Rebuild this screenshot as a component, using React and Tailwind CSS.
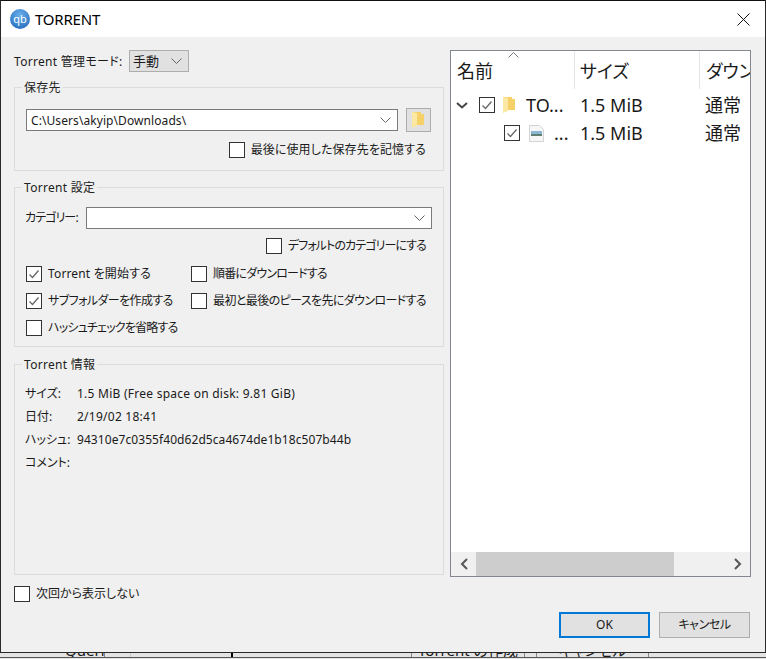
import React from "react";

const uiFont = "font-['Noto_Sans','Noto_Sans_CJK_JP',sans-serif] [font-feature-settings:'palt']";

function Check({ checked, label, className = "", labelClass = "" }) {
    return (
        <label className={`flex items-center gap-[6px] h-4 text-xs leading-4 whitespace-nowrap ${className}`}>
            <span className="w-4 h-4 shrink-0 bg-white border border-[#333] flex items-center justify-center">
                {checked && (
                    <svg width="12" height="12" viewBox="0 0 12 12" fill="none" stroke="#666" strokeWidth="1.3">
                        <path d="M1.5 6.5 L4.5 9.5 L10.5 2.5" />
                    </svg>
                )}
            </span>
            {label && <span className={labelClass}>{label}</span>}
        </label>
    );
}

function Chevron({ className = "" }) {
    return (
        <svg width="11" height="6" viewBox="0 0 11 6" fill="none" stroke="#666" className={className}>
            <path d="M0.5 0.5 L5.5 5.5 L10.5 0.5" />
        </svg>
    );
}

function Folder({ className = "" }) {
    return (
        <svg width="13" height="18" viewBox="0 0 13 18" className={className}>
            <path d="M1 1 H9 V3 H12 V14 H4 L1 14 Z" fill="#f5d168" />
            <path d="M0 1 L5 2 V15 L0 17 Z" fill="#fbe8a2" />
        </svg>
    );
}

function Group({ title, className = "", children }) {
    return (
        <fieldset className={`border border-[#dcdcdc] ${className}`}>
            <legend className="ml-[7px] px-[2px] text-xs leading-4 text-[#222]">
                <span className="block translate-y-px tracking-[0.3px]">{title}</span>
            </legend>
            {children}
        </fieldset>
    );
}

function InfoRow({ label, value, valueClass = "tracking-[0.25px]" }) {
    return (
        <div className="flex h-[23px] items-center text-xs">
            <span className="w-[52px] shrink-0">{label}</span>
            <span className={valueClass}>{value}</span>
        </div>
    );
}

function TreeRow({ chevron, indent, icon, name, nameGap, checked = true }) {
    return (
        <div className="flex h-7 items-center text-[18px] leading-7">
            <div className="w-[124px] shrink-0 flex items-center overflow-hidden">
                <span className="w-[28px] shrink-0 pl-[5px]">
                    {chevron && (
                        <svg width="12" height="7" viewBox="0 0 12 7" fill="none" stroke="#444" strokeWidth="2">
                            <path d="M1 1 L6 5.5 L11 1" />
                        </svg>
                    )}
                </span>
                <Check checked={checked} className={indent} />
                {icon}
                <span className={nameGap}>{name}</span>
            </div>
            <span className="w-[125px] shrink-0 pl-[5px]">1.5 MiB</span>
            <span className="pl-[5px] whitespace-nowrap">通常</span>
        </div>
    );
}

export default function App() {
    return (
        <div className={`w-[766px] h-[659px] overflow-hidden bg-[#e4e4e4] text-[#1a1a1a] ${uiFont}`}>
            {/* dialog */}
            <div className="h-[653px] flex flex-col bg-[#f0f0f0] border border-[#2a2a2a] border-t-[#111]">
                <div className="h-[36px] shrink-0 bg-white flex items-center pl-[9px] pr-[15px]">
                    <span className="w-5 h-5 rounded-full bg-[radial-gradient(circle_at_50%_30%,#6aaeea,#1c64b8)] text-white text-[11px] leading-5 text-center">
                        qb
                    </span>
                    <span className="ml-[5px] text-[15px] tracking-[-0.2px] text-black">TORRENT</span>
                    <svg width="13" height="13" viewBox="0 0 13 13" stroke="#111" strokeWidth="1" className="ml-auto">
                        <path d="M0.5 0.5 L12.5 12.5 M12.5 0.5 L0.5 12.5" />
                    </svg>
                </div>

                <div className="flex flex-1 pl-[13px] pr-[14px] pt-[13px] gap-[6px]">
                    {/* left column */}
                    <div className="w-[430px] shrink-0">
                        <div className="flex items-center h-[22px] text-xs">
                            <span className="w-[115px] pt-[2px] tracking-[0.3px]">Torrent 管理モード:</span>
                            <div className="w-[60px] h-[22px] bg-[#e1e1e1] border border-[#adadad] flex items-center justify-between pl-[3px] pr-[6px]">
                                <span className="pt-[2px] text-[13px]">手動</span>
                                <Chevron />
                            </div>
                        </div>

                        <Group title="保存先" className="mt-[7px] h-[92px]">
                            <div className="px-[11px]">
                                <div className="flex items-center mt-[13px]">
                                    <div className="w-[372px] h-[22px] bg-white border border-[#7a7a7a] flex items-center justify-between pl-1 pr-[6px] text-xs">
                                        <span className="pt-[1px] tracking-[0.08px]">C:\Users\akyip\Downloads\</span>
                                        <Chevron />
                                    </div>
                                    <div className="ml-2 w-[25px] h-6 bg-[#e1e1e1] border border-[#adadad] flex items-center justify-center">
                                        <Folder />
                                    </div>
                                </div>
                                <div className="flex justify-end pr-[6px] mt-[10px]">
                                    <Check label="最後に使用した保存先を記憶する" labelClass="tracking-[0.1px]" />
                                </div>
                            </div>
                        </Group>

                        <Group title="Torrent 設定" className="mt-[8px] h-[168px]">
                            <div className="px-[10px]">
                                <div className="flex items-center mt-[12px] text-xs">
                                    <span className="w-[61px] tracking-[-0.9px]">カテゴリー:</span>
                                    <div className="w-[346px] h-[22px] bg-white border border-[#7a7a7a] flex items-center justify-end pr-[6px]">
                                        <Chevron />
                                    </div>
                                </div>
                                <div className="flex justify-end pr-[7px] mt-[9px]">
                                    <Check label="デフォルトのカテゴリーにする" labelClass="tracking-[-0.9px]" />
                                </div>
                                <div className="grid grid-cols-[165px_1fr] gap-y-[11px] mt-[12px] pl-px">
                                    <Check checked label="Torrent を開始する" labelClass="tracking-[0.15px]" />
                                    <Check label="順番にダウンロードする" labelClass="tracking-[-0.8px]" />
                                    <Check checked label="サブフォルダーを作成する" labelClass="tracking-[-0.6px]" />
                                    <Check label="最初と最後のピースを先にダウンロードする" labelClass="tracking-[-0.6px]" />
                                    <Check label="ハッシュチェックを省略する" labelClass="tracking-[-0.8px]" />
                                </div>
                            </div>
                        </Group>

                        <Group title="Torrent 情報" className="mt-[9px] h-[219px]">
                            <div className="px-[10px] mt-[10px]">
                                <InfoRow label="サイズ:" value="1.5 MiB (Free space on disk: 9.81 GiB)" />
                                <InfoRow label="日付:" value="2/19/02 18:41" />
                                <InfoRow
                                    label="ハッシュ:"
                                    value="94310e7c0355f40d62d5ca4674de1b18c507b44b"
                                    valueClass="tracking-[0.07px]"
                                />
                                <InfoRow label="コメント:" value="" />
                            </div>
                        </Group>

                        <Check label="次回から表示しない" className="mt-[11px]" />
                    </div>

                    {/* file tree */}
                    <div className="w-[301px] h-[527px] shrink-0 bg-white border border-[#828790] flex flex-col">
                        <div className="relative h-[38px] shrink-0 flex text-[18px] overflow-hidden">
                            <svg width="11" height="6" viewBox="0 0 11 6" fill="none" stroke="#777" className="absolute left-[57px] top-[1px]">
                                <path d="M0.5 5.5 L5.5 0.5 L10.5 5.5" />
                            </svg>
                            <div className="w-[124px] shrink-0 border-r border-[#e5e5e5] pl-[6px] pt-[7px]">名前</div>
                            <div className="w-[125px] shrink-0 border-r border-[#e5e5e5] pl-[5px] pt-[7px]">サイズ</div>
                            <div className="pl-[6px] pt-[7px] whitespace-nowrap">ダウンロード</div>
                        </div>
                        <div className="flex-1 pt-[2px]">
                            <TreeRow
                                chevron
                                icon={<Folder className="ml-2 shrink-0" />}
                                name="TO..."
                                nameGap="ml-[10px]"
                            />
                            <TreeRow
                                indent="ml-[25px]"
                                icon={
                                    <svg width="15" height="17" viewBox="0 0 15 17" className="ml-[9px] shrink-0">
                                        <path d="M0.5 0.5 H10.5 L14.5 4.5 V16.5 H0.5 Z" fill="#f6f6f6" stroke="#d4d4d4" />
                                        <rect x="2" y="6" width="11" height="5" fill="#8db7d4" />
                                        <rect x="2" y="9" width="11" height="2" fill="#5f7f70" />
                                    </svg>
                                }
                                name="..."
                                nameGap="ml-[10px]"
                            />
                        </div>
                        <div className="h-[24px] shrink-0 bg-[#f0f0f0] flex">
                            <div className="w-[25px] flex items-center justify-center">
                                <svg width="8" height="12" viewBox="0 0 8 12" fill="none" stroke="#555" strokeWidth="2">
                                    <path d="M7 1 L2 6 L7 11" />
                                </svg>
                            </div>
                            <div className="w-[198px] bg-[#cdcdcd]" />
                            <div className="flex-1 flex items-center justify-end pr-2">
                                <svg width="8" height="12" viewBox="0 0 8 12" fill="none" stroke="#555" strokeWidth="2">
                                    <path d="M1 1 L6 6 L1 11" />
                                </svg>
                            </div>
                        </div>
                    </div>
                </div>

                <div className="h-[40px] shrink-0 flex justify-end gap-[9px] pr-[15px]">
                    <button className="w-[91px] h-[26px] bg-[#e1e1e1] border-2 border-[#0078d7] text-xs">OK</button>
                    <button className="w-[91px] h-[26px] bg-[#e1e1e1] border border-[#adadad] text-xs tracking-[-0.4px]">キャンセル</button>
                </div>
            </div>

            {/* window behind the dialog */}
            <div className="h-[5px] flex overflow-hidden border-b border-[#555] text-[15px] leading-none">
                <div className="w-[105px] border-r border-[#888] pl-[65px]">
                    <div className="-mt-[10px]">Queri</div>
                </div>
                <div className="w-[26px] border-r border-[#ccc]" />
                <div className="w-[102px] border-r-2 border-black" />
                <div className="w-[179px] border-r border-[#888]" />
                <div className="w-[113px] border-r border-[#888] text-center">
                    <div className="-mt-[10px]">Torrent の作成</div>
                </div>
                <div className="w-[12px] border-r border-[#888]" />
                <div className="w-[112px] border-r border-[#888] text-center">
                    <div className="-mt-[10px]">キャンセル</div>
                </div>
            </div>
        </div>
    );
}
